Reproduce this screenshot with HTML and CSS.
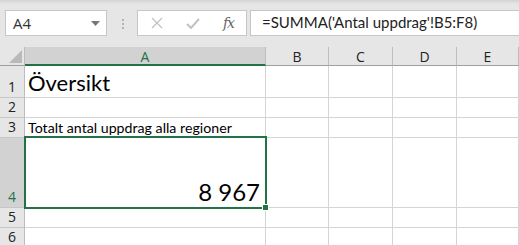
FILE: index.html
```html
<!DOCTYPE html>
<html>
<head>
<meta charset="UTF-8">
<title>Översikt</title>
<link rel="stylesheet" href="styles.css">
</head>
<body>
<div class="toolbar">
  <div class="namebox">
    <span>A4</span>
    <svg class="caret" width="9" height="5" viewBox="0 0 9 5"><path d="M0 0h9L4.5 5z" fill="#777"/></svg>
  </div>
  <div class="grip"><i></i><i></i><i></i></div>
  <div class="fxbox">
    <svg width="12" height="12" viewBox="0 0 12 12"><path d="M1 1l10 10M11 1L1 11" stroke="#c2c2c2" stroke-width="1.3" fill="none"/></svg>
    <svg width="14" height="11" viewBox="0 0 14 11"><path d="M1 6l4 4 8-9" stroke="#c2c2c2" stroke-width="2" fill="none"/></svg>
    <span class="fx">fx</span>
  </div>
  <div class="formula">=SUMMA('Antal uppdrag'!B5:F8)</div>
</div>

<div class="sheet">
  <div class="corner"></div>
  <div class="colhead active">A</div>
  <div class="colhead">B</div>
  <div class="colhead">C</div>
  <div class="colhead">D</div>
  <div class="colhead">E</div>

  <div class="rowhead">1</div>
  <div class="cell title">Översikt</div>
  <div class="cell"></div><div class="cell"></div><div class="cell"></div><div class="cell"></div>

  <div class="rowhead">2</div>
  <div class="cell"></div><div class="cell"></div><div class="cell"></div><div class="cell"></div><div class="cell"></div>

  <div class="rowhead">3</div>
  <div class="cell label">Totalt antal uppdrag alla regioner</div>
  <div class="cell"></div><div class="cell"></div><div class="cell"></div><div class="cell"></div>

  <div class="rowhead active">4</div>
  <div class="cell total">8 967</div>
  <div class="cell"></div><div class="cell"></div><div class="cell"></div><div class="cell"></div>

  <div class="rowhead">5</div>
  <div class="cell"></div><div class="cell"></div><div class="cell"></div><div class="cell"></div><div class="cell"></div>

  <div class="rowhead">6</div>
  <div class="cell"></div><div class="cell"></div><div class="cell"></div><div class="cell"></div><div class="cell"></div>

  <div class="selection"><span class="handle"></span></div>
</div>
</body>
</html>
```

FILE: styles.css
```css
* { box-sizing: border-box; }
body {
    margin: 0;
    width: 519px;
    height: 245px;
    overflow: hidden;
    background: #e6e6e6;
    font-family: "Open Sans", "Noto Sans", sans-serif;
    color: #222;
}

/* formula bar */
.toolbar {
    display: flex;
    align-items: center;
    height: 47px;
    padding: 0 0 0 5px;
    background: linear-gradient(#d2d2d2 0, #e2e2e2 3px, #e6e6e6 5px);
}
.namebox {
    display: flex;
    align-items: center;
    justify-content: space-between;
    width: 102px;
    height: 26px;
    margin-top: -1px;
    padding: 0 6px 0 7px;
    background: #fff;
    border: 1px solid #c6c6c6;
    font-size: 15px;
    color: #333;
}
.caret { margin-top: 1px; }
.grip {
    display: flex;
    flex-direction: column;
    gap: 2px;
    margin: 0 13px 0 15px;
}
.grip i { width: 2px; height: 2px; background: #b4b4b4; }
.fxbox {
    display: flex;
    align-items: center;
    justify-content: space-between;
    width: 110px;
    height: 26px;
    margin-top: -1px;
    padding: 0 12px 0 13px;
    background: #fff;
    border: 1px solid #c6c6c6;
}
.fx {
    font-family: "DejaVu Serif", serif;
    font-style: italic;
    font-size: 14px;
    color: #666;
    letter-spacing: -1px;
}
.formula {
    flex: 1;
    height: 26px;
    margin: -1px 0 0 3px;
    padding: 2px 0 0 11px;
    background: #fff;
    border: 1px solid #c6c6c6;
    border-right: 0;
    font-family: Lato, sans-serif;
    font-size: 15px;
    color: #222;
}

/* grid */
.sheet {
    position: relative;
    display: grid;
    grid-template-columns: 25px 241px 63px 64px 64px 1fr;
    grid-template-rows: 19px 32px 20px 20px 70px 20px 20px;
    background: #fff;
    font-family: Lato, "Open Sans", sans-serif;
}
.corner {
    position: relative;
    background: #e6e6e6;
    border-right: 1px solid #bdbdbd;
    border-bottom: 1px solid #9f9f9f;
}
.corner::after {
    content: "";
    position: absolute;
    right: 2px;
    bottom: 2px;
    border-style: solid;
    border-width: 0 0 13px 13px;
    border-color: transparent transparent #b9b9b9 transparent;
}
.colhead {
    display: flex;
    align-items: center;
    justify-content: center;
    padding-top: 1px;
    background: #e6e6e6;
    border-right: 1px solid #bdbdbd;
    border-bottom: 1px solid #9f9f9f;
    font-family: "Open Sans", sans-serif;
    font-size: 14px;
    color: #222;
}
.colhead.active {
    background: #d2d2d2;
    border-bottom: 2px solid #217346;
    color: #217346;
}
.rowhead {
    display: flex;
    align-items: flex-end;
    justify-content: center;
    padding-bottom: 1px;
    background: #e6e6e6;
    border-right: 1px solid #bdbdbd;
    border-bottom: 1px solid #c6c6c6;
    font-family: "Open Sans", sans-serif;
    font-size: 14px;
    line-height: 18px;
    color: #222;
}
.rowhead.active {
    background: #d2d2d2;
    color: #217346;
}
.cell {
    display: flex;
    align-items: flex-end;
    padding: 0 3px 0 3px;
    border-right: 1px solid #d4d4d4;
    border-bottom: 1px solid #d4d4d4;
    white-space: nowrap;
    color: #000;
}
.title {
    font-size: 22px;
    line-height: 28px;
}
.label {
    font-size: 14.2px;
    line-height: 18px;
}
.total {
    justify-content: flex-end;
    padding-right: 5px;
    font-size: 24px;
    line-height: 30px;
}

/* active cell outline */
.selection {
    position: absolute;
    left: 24px;
    top: 89px;
    width: 243px;
    height: 73px;
    border: 2px solid #217346;
}
.handle {
    position: absolute;
    right: -4px;
    bottom: -4px;
    width: 7px;
    height: 7px;
    background: #217346;
    border: 1px solid #fff;
}
```
